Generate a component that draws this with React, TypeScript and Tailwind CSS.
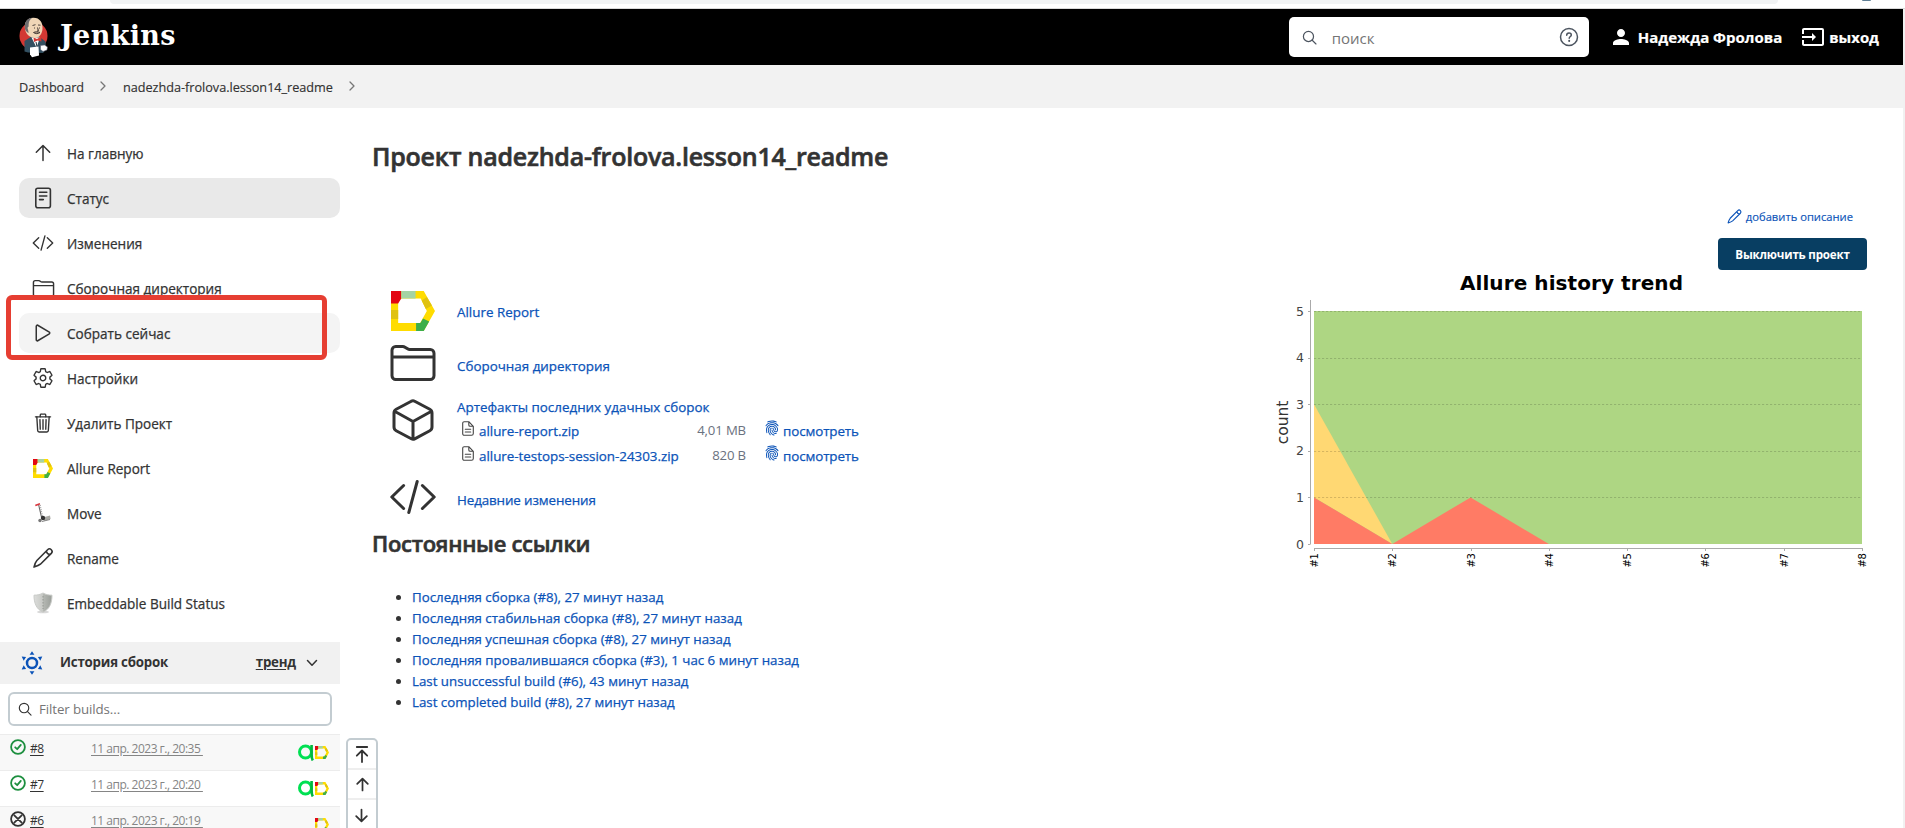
import type { ReactNode } from "react";
import {
  IoFingerPrint,
  IoFolderOutline,
  IoPlayOutline,
  IoSettingsOutline,
  IoTrashOutline,
} from "react-icons/io5";
import { MdInput, MdPerson } from "react-icons/md";

const line = {
  fill: "none",
  stroke: "currentColor",
  strokeLinecap: "round",
  strokeLinejoin: "round",
} as const;

function ArrowUp({ size, width = 1.5 }: { size: number; width?: number }) {
  return (
    <svg width={size} height={size} viewBox="0 0 24 24" {...line} strokeWidth={width}>
      <path d="M5.3 11.2 12 4.5l6.7 6.7M12 4.8v14.7" />
    </svg>
  );
}

function DocIcon() {
  return (
    <svg width="24" height="24" viewBox="0 0 24 24" {...line} strokeWidth="1.6">
      <rect x="4.8" y="2.3" width="14.6" height="19.4" rx="2" />
      <path d="M8.5 6.3h7.3M8.5 10h7.3M8.5 13.6h3.8" />
    </svg>
  );
}

function CodeIcon({ size, width }: { size: number; width: number }) {
  return (
    <svg width={size} height={size} viewBox="0 0 48 48" {...line} strokeWidth={width}>
      <path d="M14.6 12.5 2.8 24l11.8 11.5M33.4 12.5 45.2 24 33.4 35.5M28.2 8.5l-8.4 31" />
    </svg>
  );
}

function PencilIcon({ size }: { size: number }) {
  return (
    <svg width={size} height={size} viewBox="0 0 24 24" {...line} strokeWidth="1.6">
      <path d="M16.6 3.7c1.1-1.1 2.7-1 3.7 0 1 1 1 2.6 0 3.7L9.4 18.2c-1.5 1.4-4 2.2-6.4 2.9.6-2.5 1.5-5.1 2.9-6.6zM15.6 5.5c.2 1.6 1.3 2.7 2.9 2.9" />
    </svg>
  );
}

function SearchIcon({ size }: { size: number }) {
  return (
    <svg width={size} height={size} viewBox="0 0 16 16" {...line} strokeWidth="1.3">
      <circle cx="6.9" cy="6.9" r="5.4" />
      <path d="m10.9 10.9 4 4" />
    </svg>
  );
}

function AllureIcon({ width, height }: { width: number; height: number }) {
  return (
    <svg width={width} height={height} viewBox="0 0 43 40" preserveAspectRatio="none">
      <path fill="#ffdc00" fillRule="evenodd" d="M0 0h32l11 20-11 20H0zM7 11v21h21.5L35 20 29 7.5H10L7 11z" />
      <path fill="#e30613" d="M0 0h10v7.5L7 12.5H0z" />
      <path fill="#a5d3a4" d="M10 0h14v7.5H10z" />
      <path fill="#e0c210" d="M0 19h7v9H0zM30 9.5l5-3.5 5 8.5-6 3.5z" />
      <path fill="#3dae49" d="M24.5 40v-8h4.2l2.6-4.5 6 3L32 40z" />
    </svg>
  );
}

function TestOpsIcon() {
  return (
    <svg width="16" height="17" viewBox="0 0 16 17" fill="none">
      <circle cx="7.5" cy="8" r="6" stroke="#00e052" strokeWidth="3" />
      <path d="M13.6 1v9.500c0 2.500.2 4.300 1.200 6" stroke="#00b83f" strokeWidth="2.600" />
    </svg>
  );
}

function MoveIcon() {
  return (
    <svg width="24" height="24" viewBox="0 0 24 24">
      <path d="M7.7 4l3 13" stroke="#666" strokeWidth="1.1" fill="none" />
      <path d="M9.2 4l2.5 12" stroke="#999" strokeWidth="1" strokeDasharray="1 1" fill="none" />
      <path d="M4.3 4.6l4.7-1.8" stroke="#d9363e" strokeWidth="1.6" />
      <path d="M10 17l9-2.500.6 3.500-6 2z" fill="#a9a9a4" />
      <circle cx="12" cy="17" r="2.200" fill="#333" />
      <circle cx="9" cy="19.500" r="1.700" fill="#777" />
      <path d="M11 20.500l8-2" stroke="#888" strokeWidth="1" />
    </svg>
  );
}

function ShieldIcon() {
  return (
    <svg width="24" height="24" viewBox="0 0 24 24">
      <defs>
        <linearGradient id="shield" x1="0" x2="1">
          <stop offset="0" stopColor="#dcdddb" />
          <stop offset=".5" stopColor="#c6c8c4" />
          <stop offset=".52" stopColor="#b5b8b3" />
          <stop offset="1" stopColor="#9a9e99" />
        </linearGradient>
      </defs>
      <ellipse cx="12" cy="21" rx="6" ry="1.300" fill="#d8d8d8" />
      <path d="M12 2c2.500 1.500 5.500 2.200 9 2.200 0 8-2.500 14-9 17-6.500-3-9-9-9-17 3.500 0 6.500-.7 9-2.200z" fill="url(#shield)" stroke="#c9cbc8" />
      <path d="M12 5v13" stroke="#8a8d88" strokeWidth=".8" strokeDasharray="1.500 1.500" />
    </svg>
  );
}

function BuildHistoryIcon() {
  return (
    <svg width="24" height="24" viewBox="0 0 24 24">
      <circle cx="12" cy="12" r="5" fill="none" stroke="#0b53b8" strokeWidth="2.500" />
      <g fill="#0b53b8">
        <path d="M12 .2l2.400 3.600H9.600zM12 23.800l2.400-3.600H9.600z" />
        <path d="M1.700 5.600l4.400.4-2.400 3.700zM22.300 5.600l-4.400.4 2.400 3.700zM1.700 18.400l4.400-.4-2.400-3.700zM22.300 18.400l-4.400-.4 2.400-3.700z" />
      </g>
    </svg>
  );
}

function JenkinsLogo() {
  return (
    <svg width="30" height="41" viewBox="0 0 30 41">
      <ellipse cx="14.500" cy="19" rx="14" ry="14" fill="#d33833" />
      <path d="M5.500 24l7-4.500 8 .5 6 4.500.5 8-3 3.500-15-.5-3.500-1z" fill="#335061" />
      <path d="M12.500 20.500l5 10 3.500-10z" fill="#fff" />
      <path d="M14.500 20.500l3.500 1.500 4-2.500.5 5-4-1-3.500 1.500z" fill="#d33833" />
      <path d="M17 25l1.500 7" stroke="#22333f" />
      <path d="M6 12C5 5 8.500.8 14.500.8c6.500 0 9.300 5 9 10.700-.2 5.500-3.500 9.500-7.500 9.500-5 0-9-3.500-10-9z" fill="#f0d6b7" />
      <path d="M6 12C5 5 8.500.8 13.500.8 10 3 9.500 6 9.700 9.500c-1.200.3-1.400 1.800-.6 3.500l.6 3c-2-1-3.200-2.300-3.700-4z" fill="#6d6b6d" />
      <path d="M13.500 8.500l3-.8M19 8l2.500.2M15 11h1M20 11h1M18.500 10.500l1 3.200-1.500.5M14.500 15.500c2-1 4.500-1 6.500 0-2 1.500-4.500 1.600-6.500 0z" stroke="#3b3230" strokeWidth=".9" fill="#b9a089" />
      <path d="M11 30.500l8.500-1 .5 9-7 1.800-2-3z" fill="#fff" />
      <path d="M21.500 28.500l4-.5 3 2-.5 3-4 1.500-2.500-2z" fill="#fff" stroke="#556" strokeWidth=".5" />
    </svg>
  );
}

const navItems: { label: string; icon: ReactNode; state?: "active" | "hover" }[] = [
  { label: "На главную", icon: <ArrowUp size={24} /> },
  { label: "Статус", icon: <DocIcon />, state: "active" },
  { label: "Изменения", icon: <CodeIcon size={22} width={3} /> },
  { label: "Сборочная директория", icon: <IoFolderOutline size={23} /> },
  { label: "Собрать сейчас", icon: <IoPlayOutline size={24} />, state: "hover" },
  { label: "Настройки", icon: <IoSettingsOutline size={22} /> },
  { label: "Удалить Проект", icon: <IoTrashOutline size={22} /> },
  { label: "Allure Report", icon: <AllureIcon width={20} height={19} /> },
  { label: "Move", icon: <MoveIcon /> },
  { label: "Rename", icon: <PencilIcon size={24} /> },
  { label: "Embeddable Build Status", icon: <ShieldIcon /> },
];

const itemBackground = { active: "bg-[#e9e9e9]", hover: "bg-[#f4f4f4]", none: "" };

const builds = [
  { id: "#8", date: "11 апр. 2023 г., 20:35 ", ok: true },
  { id: "#7", date: "11 апр. 2023 г., 20:20 ", ok: true },
  { id: "#6", date: "11 апр. 2023 г., 20:19 ", ok: false },
];

const artifacts = [
  { name: "allure-report.zip", size: "4,01 MB" },
  { name: "allure-testops-session-24303.zip", size: "820 B" },
];

const permalinks = [
  "Последняя сборка (#8), 27 минут назад",
  "Последняя стабильная сборка (#8), 27 минут назад",
  "Последняя успешная сборка (#8), 27 минут назад",
  "Последняя провалившаяся сборка (#3), 1 час 6 минут назад",
  "Last unsuccessful build (#6), 43 минут назад",
  "Last completed build (#8), 27 минут назад",
];

function Header() {
  return (
    <header className="flex h-14 items-center bg-black text-white">
      <div className="ml-[19px]">
        <JenkinsLogo />
      </div>
      <span className="mb-0.5 ml-[11px] font-['DejaVu_Serif',serif] text-[27px] leading-8 font-bold tracking-[0.350px]">Jenkins</span>
      <div className="mr-6 ml-auto flex h-10 w-[300px] items-center rounded-[5px] bg-white pr-[10px] pl-[13px] text-[#4d5560]">
        <SearchIcon size={15} />
        <span className="mt-0.5 ml-[15px] flex-1 text-[15px] text-[#757575]">поиск</span>
        <svg width="20" height="20" viewBox="0 0 20 20" {...line} strokeWidth="1.500">
          <circle cx="10" cy="10" r="8.500" />
          <path d="M7.700 8.200c0-1.500 1-2.300 2.300-2.300s2.300.8 2.300 2c0 1.600-2.100 1.700-2.100 3.400" />
          <path d="M10.200 13.800v.1" strokeWidth="2" />
        </svg>
      </div>
      <MdPerson size={24} className="mr-[5px] -ml-[4px]" />
      <span className="mt-px text-[15px] font-bold [-webkit-text-stroke:0.2px]">Надежда Фролова</span>
      <MdInput size={24} className="mr-1 ml-[19px]" />
      <span className="mt-px mr-6 text-[14.900px] font-bold [-webkit-text-stroke:0.2px]">выход</span>
    </header>
  );
}

function Chevron() {
  return (
    <svg width="6" height="10" viewBox="0 0 6 10" {...line} stroke="#777" strokeWidth="1.300" className="mb-0.5">
      <path d="M1 1l4 4-4 4" />
    </svg>
  );
}

function Breadcrumbs() {
  return (
    <nav className="flex h-[43px] items-center bg-[#f2f2f2] pl-[19px] text-[12.700px] text-[#333] [-webkit-text-stroke:0.15px]">
      <span className="mt-0.5 mr-[15px] w-[66px] tracking-[-0.050px]">Dashboard</span>
      <Chevron />
      <span className="mt-0.5 mr-[14px] ml-[17px] w-[212px] tracking-[-0.030px]">nadezhda-frolova.lesson14_readme</span>
      <Chevron />
    </nav>
  );
}

function Sidebar() {
  return (
    <aside className="relative flex w-[340px] shrink-0 flex-col pt-[25px]">
      <ul className="ml-[19px] flex flex-col gap-[5px]">
        {navItems.map(({ label, icon, state }) => (
          <li key={label} className={`flex h-10 items-center gap-3 rounded-[10px] pl-3 ${itemBackground[state ?? "none"]}`}>
            <span className="flex w-6 justify-center">{icon}</span>
            <span className="mt-[3px] text-[13.550px] [-webkit-text-stroke:0.25px]">{label}</span>
          </li>
        ))}
      </ul>
      <div className="absolute top-[187px] left-1.5 h-[65px] w-[321px] rounded-[6px] border-[5px] border-[#e63e32]" />

      <div className="mt-[19px] flex h-[42px] shrink-0 items-center bg-[#f1f1f1] pl-5 text-[13.300px] font-bold tracking-[-0.200px]">
        <BuildHistoryIcon />
        <span className="ml-4">История сборок</span>
        <span className="ml-auto underline underline-offset-2">тренд</span>
        <svg width="12" height="8" viewBox="0 0 12 8" {...line} strokeWidth="1.500" className="mr-[22px] ml-[10px]">
          <path d="M1.500 1.500 6 6.300l4.500-4.800" />
        </svg>
      </div>
      <div className="mt-2 mb-2 ml-2 flex h-[34px] w-[324px] shrink-0 items-center rounded-[6px] border-2 border-[#c3ccd1] pl-2">
        <SearchIcon size={14} />
        <span className="mt-px ml-[7px] text-[13.300px] tracking-[-0.100px] text-[#757575]">Filter builds...</span>
      </div>
      {builds.map(({ id, date, ok }) => (
        <div key={id} className="flex h-9 shrink-0 border-t border-[#ececec] pt-1 pl-2.5 text-[12px] odd:bg-[#f8f8f8]">
          {ok ? (
            <svg width="16" height="16" viewBox="0 0 16 16" {...line} stroke="#1d8f3f" strokeWidth="1.800">
              <circle cx="8" cy="8" r="6.900" />
              <path d="M5.200 8.300l2 1.900 3.600-4.300" />
            </svg>
          ) : (
            <svg width="16" height="16" viewBox="0 0 16 16" {...line} strokeWidth="1.800">
              <circle cx="8" cy="8" r="6.900" />
              <path d="M4.300 4.300l7.400 7.400M11.700 4.300l-7.400 7.400" />
            </svg>
          )}
          <span className="mt-px ml-1 w-[61px] tracking-[-0.500px]"><span className="underline underline-offset-2">{id}</span></span>
          <span className="mt-px tracking-[-0.500px] whitespace-pre text-[#858585] underline underline-offset-2">{date}</span>
          <span className="mt-[5px] mr-[11px] ml-auto flex items-start gap-px">
            {ok && <TestOpsIcon />}
            <span className="pt-0.5"><AllureIcon width={14} height={13} /></span>
          </span>
        </div>
      ))}
      <div className="absolute top-[630px] left-[346px] flex h-28 w-8 flex-col rounded-[5px] border-2 border-[#c3ccd1] text-[#333]">
        <span className="flex h-[30px] items-center justify-center border-b-2 border-[#eeeeee]">
          <svg width="16" height="20" viewBox="0 0 16 20" {...line} strokeWidth="1.800">
            <path d="M2.800 3h10.400M8 7v11M2.800 11.700 8 6.500l5.200 5.200" />
          </svg>
        </span>
        <span className="flex h-[30px] items-center justify-center border-b-2 border-[#eeeeee]">
          <ArrowUp size={19} width={2.2} />
        </span>
        <span className="flex h-[32px] rotate-180 items-center justify-center">
          <ArrowUp size={19} width={2.2} />
        </span>
      </div>
    </aside>
  );
}

function ProjectDetails() {
  return (
    <section className="flex flex-1 flex-col pt-[30px]">
      <h1 className="text-[25px] leading-9 font-semibold tracking-[-0.230px] [-webkit-text-stroke:0.6px]">
        Проект nadezhda-frolova.lesson14_readme
      </h1>
      <div className="mt-[112px] flex flex-col text-[13.400px] text-[#0b53b8] [-webkit-text-stroke:0.25px]">
        <div className="flex h-[50px] items-center">
          <span className="ml-[19px] w-[66px]"><AllureIcon width={44} height={40} /></span>
          <span className="mt-0.5">Allure Report</span>
        </div>
        <div className="flex h-[54px] items-center">
          <span className="ml-[17px] w-[68px] text-[#333]"><IoFolderOutline size={48} /></span>
          <span className="mt-1.5">Сборочная директория</span>
        </div>
        <div className="flex h-[82px]">
          <span className="mt-[6px] ml-[17px] w-[68px] text-[#333]">
            <svg width="48" height="48" viewBox="0 0 48 48" {...line} strokeWidth="3">
              <path d="M22.300 5.200 7.200 13.300Q5 14.500 5 17v14q0 2.500 2.200 3.700l15.100 8.100q1.700.9 3.400 0l15.100-8.100Q43 33.500 43 31V17q0-2.500-2.200-3.700L25.700 5.200q-1.700-.9-3.400 0zM6 15.500l18 10 18-10M24 25.500v17" />
            </svg>
          </span>
          <div className="pt-[7px]">
            <div className="h-[21px] leading-[21px]">Артефакты последних удачных сборок</div>
            {artifacts.map(({ name, size }) => (
              <div key={name} className="flex h-[25px] items-center">
                <svg width="12" height="15" viewBox="0 0 12 15" {...line} stroke="#444" strokeWidth="1.100" className="mr-[5px] mb-1 ml-[5px]">
                  <path d="M2.200.7h4.600l4.500 4.600v7.200a1.800 1.800 0 0 1-1.800 1.800H2.200A1.500 1.500 0 0 1 .7 12.800V2.200A1.500 1.500 0 0 1 2.200.7zM6.800.7v3.300a1.300 1.300 0 0 0 1.300 1.300h3.200M3.300 8.300h5.400M3.300 11h5.400" />
                </svg>
                <span className="mt-px w-[200px] tracking-[-0.020px]">{name}</span>
                <span className="mt-px w-[67px] text-right text-[13.200px] tracking-[-0.150px] text-[#6b7280] [-webkit-text-stroke:0]">{size}</span>
                <IoFingerPrint size={16} className="mr-[3px] mb-1.5 ml-[18px]" />
                <span className="mt-px tracking-[-0.100px]">посмотреть</span>
              </div>
            ))}
          </div>
        </div>
        <div className="flex h-[50px] items-center">
          <span className="ml-[17px] w-[68px] text-[#333]"><CodeIcon size={48} width={3} /></span>
          <span className="mt-[7px] tracking-[-0.120px]">Недавние изменения</span>
        </div>
      </div>
      <h2 className="mt-2 text-[22px] leading-[26px] font-semibold tracking-[-0.280px] [-webkit-text-stroke:0.6px]">Постоянные ссылки</h2>
      <ul className="mt-[31px] ml-10 list-disc text-[13.300px] leading-[21px] [-webkit-text-stroke:0.25px]">
        {permalinks.map((text) => (
          <li key={text}><span className="text-[#0b53b8]">{text}</span></li>
        ))}
      </ul>
    </section>
  );
}

const plot = { left: 44, right: 592, top: 41, bottom: 274 };
const stepX = (plot.right - plot.left) / 7;
const stepY = (plot.bottom - plot.top) / 5;
const x = (i: number) => plot.left + stepX * i;
const y = (v: number) => plot.bottom - stepY * v;

function TrendChart() {
  return (
    <svg width="610" height="305" viewBox="0 0 610 305" fontFamily="'DejaVu Sans', sans-serif">
      <text x="301.500" y="20" textAnchor="middle" fontSize="20" fontWeight="bold" letterSpacing=".08" fill="#000">Allure history trend</text>
      <rect x={plot.left} y={plot.top} width={plot.right - plot.left} height={plot.bottom - plot.top} fill="#aed683" />
      <path d={`M${x(0)} ${y(3)}L${x(1)} ${y(0)}L${x(0)} ${y(1)}z`} fill="#ffd873" />
      <path d={`M${x(0)} ${y(1)}L${x(1)} ${y(0)}H${x(0)}zM${x(1)} ${y(0)}L${x(2)} ${y(1)}L${x(3)} ${y(0)}z`} fill="#ff7b65" />
      {[1, 2, 3, 4, 5].map((v) => (
        <path key={v} d={`M${plot.left} ${Math.round(y(v)) + 0.5}H${plot.right}`} stroke="#000" strokeOpacity=".16" strokeDasharray="2.200 1.800" />
      ))}
      <path d="M40.500 30v244.500M44 278.500h549" stroke="#aaa" fill="none" />
      {[0, 1, 2, 3, 4, 5].map((v) => (
        <g key={v}>
          <path d={`M38 ${Math.round(y(v)) + 0.5}h2`} stroke="#aaa" />
          <text x="34" y={y(v) + 4.500} textAnchor="end" fontSize="12.500" fill="#444">{v}</text>
        </g>
      ))}
      {[0, 1, 2, 3, 4, 5, 6, 7].map((i) => (
        <g key={i}>
          <path d={`M${Math.round(x(i)) + 0.5} 279v2`} stroke="#aaa" />
          <text transform={`translate(${x(i) + 4} 297.500) rotate(-90)`} fontSize="10" letterSpacing="-.5" fill="#000">{`#${i + 1}`}</text>
        </g>
      ))}
      <text transform="translate(18 152.500) rotate(-90)" textAnchor="middle" fontSize="15.500" fill="#333">count</text>
    </svg>
  );
}

export default function App() {
  return (
    <div className="flex h-[828px] w-[1905px] flex-col overflow-hidden bg-white font-['Open_Sans',sans-serif] text-[#333]">
      <div className="flex h-[9px] shrink-0 border-b border-[#d9d9d9]">
        <div className="ml-[110px] h-1 w-[1668px] shrink-0 rounded-b-[6px] bg-[#f1f3f4]" />
        <div className="ml-[84px] h-px w-[9px] rounded-b-full bg-[#5f7f95]" />
      </div>
      <div className="flex flex-1 border-r-2 border-[#f1f1f1]">
        <div className="flex flex-1 flex-col">
          <Header />
          <Breadcrumbs />
          <main className="flex h-[720px]">
            <Sidebar />
            <div className="flex flex-1 pl-8">
              <ProjectDetails />
              <aside className="flex w-[633px] flex-col pt-[98px]">
                <div className="flex h-5 items-center justify-end pr-[50px] text-[11.200px] text-[#0b53b8] [-webkit-text-stroke:0.15px]">
                  <PencilIcon size={17} />
                  <span className="mt-0.5 ml-[3px]">добавить описание</span>
                </div>
                <button className="mt-3 mr-9 flex h-8 w-[149px] items-center justify-center self-end rounded-[4px] bg-[#083e62] pt-0.5 text-[11.600px] font-bold tracking-[-0.200px] text-white">
                  Выключить проект
                </button>
                <TrendChart />
              </aside>
            </div>
          </main>
        </div>
      </div>
    </div>
  );
}
